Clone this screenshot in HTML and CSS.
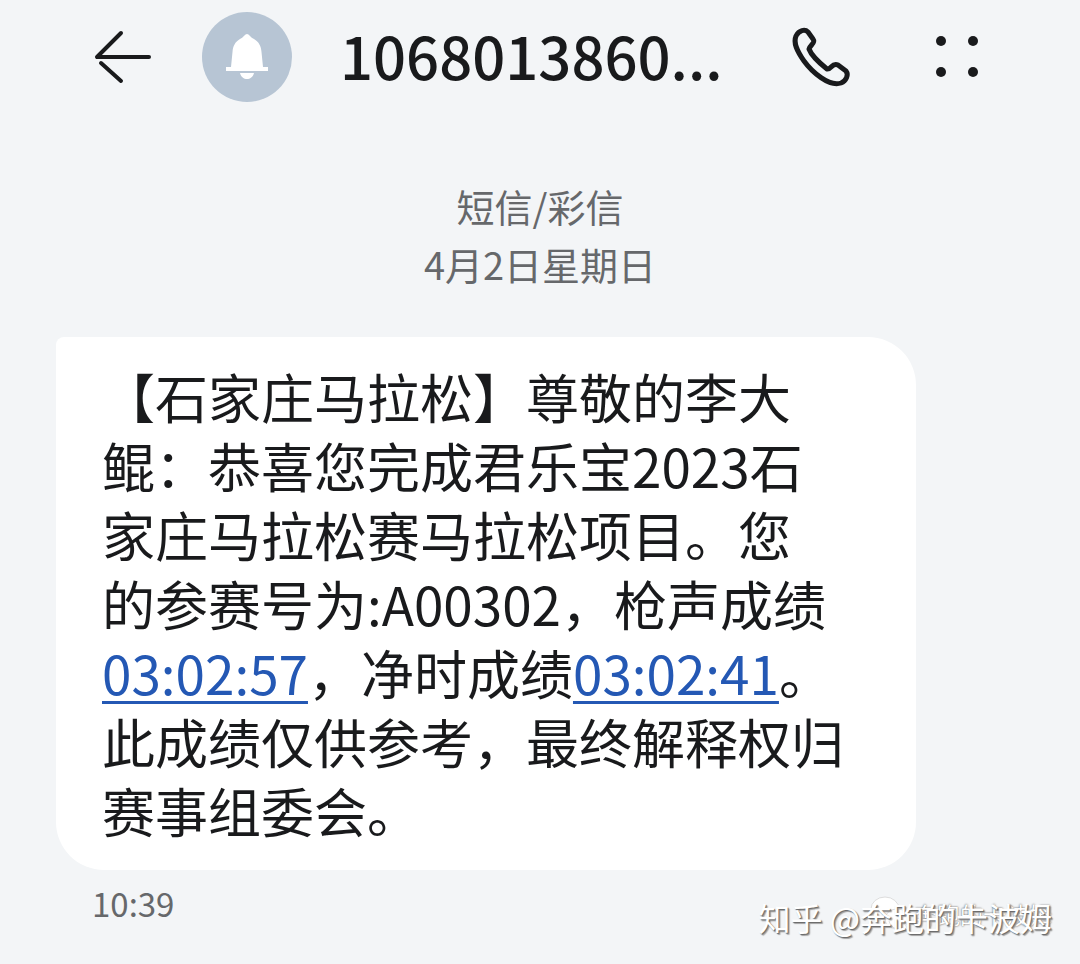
FILE: index.html
```
<!DOCTYPE html>
<html lang="zh-CN">
  <head>
    <meta charset="utf-8">
    <meta name="viewport" content="width=device-width, initial-scale=1">
    <title>1068013860...</title>
    <link rel="stylesheet" href="styles.css">
  </head>
  <body>
  <div class="page">
    <header class="topbar">
      <button class="icon-btn btn-back" type="button" aria-label="返回">
        <svg width="58" height="54" viewBox="0 0 58 54"><path d="M28 3L4 27H56M8 33L28 51"/></svg>
      </button>
      <div class="avatar">
        <svg width="42" height="46" viewBox="0 0 42 46"><path d="M21 0c-2 0-3 3-7 5C9 8 7 12 6.500 18L5 33H0v4h42v-4h-5l-1.500-15C35 12 33 8 28 5c-4-2-5-5-7-5zM14 39h14c-1 4-4 6-7 6s-6-2-7-6z"/></svg>
      </div>
      <h1>1068013860...</h1>
      <button class="icon-btn btn-call" type="button" aria-label="拨打电话">
        <svg width="58" height="58" viewBox="0 0 58 58"><path d="M4 8C7 2 13 1 16 4L21 11C24 15 18 17 17 21C20 29 30 37 35 41C39 42 40 34 46 37L54 43C57 47 54 53 49 55C37 59 20 44 12 33C5 23 1 15 4 8Z"/></svg>
      </button>
      <button class="icon-btn btn-more" type="button" aria-label="更多">
        <svg width="46" height="46" viewBox="0 0 46 46"><circle cx="7" cy="7" r="5"/><circle cx="39" cy="7" r="5"/><circle cx="7" cy="38" r="5"/><circle cx="39" cy="38" r="5"/></svg>
      </button>
    </header>
    <div class="thread-info">
      <p>短信/彩信</p>
      <p>4月2日星期日</p>
    </div>
    <div class="bubble">
      <p>【石家庄马拉松】尊敬的李大<br>鲲：恭喜您完成君乐宝2023石<br>家庄马拉松赛马拉松项目。您<br>的参赛号为:A00302，枪声成绩<br><a href="#">03:02:57</a>，净时成绩<a href="#">03:02:41</a>。<br>此成绩仅供参考，最终解释权归<br>赛事组委会。</p>
    </div>
    <footer class="bottom">
      <time>10:39</time>
      <div class="watermark">
        <div class="account">
          <svg width="40" height="36" viewBox="0 0 40 36"><ellipse cx="15" cy="13" rx="14" ry="12"/><ellipse cx="27" cy="23" rx="12" ry="10"/><path d="M19 25c2 8 9 9 14 7l5 2-2-4"/></svg>
          <span>奔跑的卡波姆</span>
        </div>
        <p>知乎 @奔跑的卡波姆</p>
      </div>
    </footer>
  </div>
  </body>
</html>
```
FILE: styles.css
```
* { box-sizing: border-box; }
body { margin: 0; background: #f3f5f7; color: #191a1c; font-family: "Noto Sans CJK SC", sans-serif; }
h1, p { margin: 0; }

.page { padding: 0 28px 0 56px; }

.topbar { display: flex; align-items: center; height: 114px; padding: 0 72px 0 37px; }
.topbar h1 { flex: 1; margin-left: 48px; padding-bottom: 4px; font-size: 58px; line-height: 80px; font-weight: 500; white-space: nowrap; }
.icon-btn { display: flex; padding: 0; border: 0; background: none; cursor: pointer; }
.icon-btn svg { fill: none; stroke: #191a1c; stroke-width: 4; stroke-linecap: round; stroke-linejoin: round; }
.btn-call svg { stroke-width: 5; overflow: visible; }
.btn-more { margin-left: 84px; }
.btn-more svg { fill: #191a1c; stroke: none; }

.avatar { display: flex; align-items: center; justify-content: center; width: 90px; height: 90px; margin-left: 51px; border-radius: 50%; background: #b7c5d4; }
.avatar svg { fill: #fff; }

.thread-info { padding: 63px 28px 44px 0; color: #66686b; font-size: 38px; line-height: 58px; text-align: center; }

.bubble { max-width: 860px; padding: 25px 46px; border-radius: 8px 48px 48px 48px; background: #fff; }
.bubble p { font-size: 53px; line-height: 69px; white-space: nowrap; }
.bubble a { color: #2458b4; text-decoration-thickness: 3px; text-underline-offset: 6px; }

.bottom { display: flex; justify-content: space-between; padding: 8px 0 0 36px; }
.bottom time { color: #66686b; font-size: 33px; line-height: 50px; }

.watermark { position: relative; margin-top: 14px; color: #fff; }
.watermark p { position: relative; font-size: 32px; line-height: 50px; text-shadow: 1px 1px 1px #666, 2px 2px 1px #aaa; }
/* account name lies under the site name */
.account { position: absolute; right: 0; top: 2px; display: flex; align-items: center; gap: 4px; font-size: 23px; line-height: 40px; white-space: nowrap; text-shadow: 0 0 2px #333; }
.account svg { fill: #fff; stroke: #ddd; stroke-width: 1; }
```
